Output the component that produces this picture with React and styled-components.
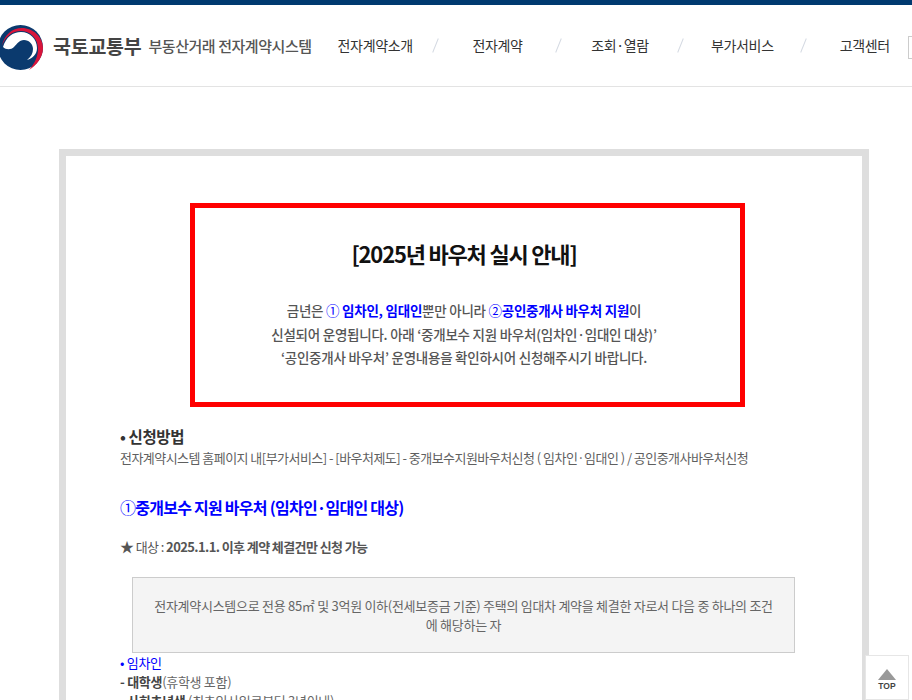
import React from 'react';
import styled, { createGlobalStyle } from 'styled-components';

const GlobalStyle = createGlobalStyle`
  html, body {
    margin: 0;
    padding: 0;
    height: 700px;
    overflow: hidden;
    background: #fff;
  }
  * {
    box-sizing: border-box;
  }
  body {
    font-family: "Noto Sans CJK KR", "Noto Sans", sans-serif;
    color: #555;
  }
`;

const navItems = ['전자계약소개', '전자계약', '조회·열람', '부가서비스', '고객센터'];

const Logo = () => (
  <LogoSvg viewBox="0 0 45 45" aria-hidden="true">
    <circle cx="22.5" cy="22.5" r="22.5" fill="#0b3a6e" />
    <path d="M4 21C6 10 14 3 24 3C35 3 45 12 45 23C45 32 39 40 31 45C37 38 40 31 40 24C40 13 32 6 23 6C14 6 7 12 4 21Z" fill="#d8143a" />
    <path d="M5 22C8 12 15 7 23 7C32 7 39 14 39 23C39 29 35 33 29 35C33 32 35 28 35 24C35 19 31 15 26 15C21 15 19 19 16 22C13 25 8 25 5 22Z" fill="#fff" />
  </LogoSvg>
);

const App = () => (
  <>
    <GlobalStyle />
    <TopBar />
    <Header>
      <Brand>
        <Logo />
        <Ministry>국토교통부</Ministry>
        <SystemName>부동산거래 전자계약시스템</SystemName>
      </Brand>
      <Nav>
        {navItems.map((item) => (
          <NavItem key={item}>{item}</NavItem>
        ))}
      </Nav>
      <SearchStub />
    </Header>
    <Main>
      <Frame>
        <Notice>
          <NoticeTitle>[2025년 바우처 실시 안내]</NoticeTitle>
          <NoticeText>
            금년은 <Blue><Circled>①</Circled> 임차인, 임대인</Blue>뿐만 아니라 <Blue><Circled>②</Circled>공인중개사 바우처 지원</Blue>이
            <br />
            신설되어 운영됩니다. 아래 ‘중개보수 지원 바우처(임차인·임대인 대상)’
            <br />
            ‘공인중개사 바우처’ 운영내용을 확인하시어 신청해주시기 바랍니다.
          </NoticeText>
        </Notice>
        <Body>
          <SubTitle>• 신청방법</SubTitle>
          <Line>전자계약시스템 홈페이지 내[부가서비스] - [바우처제도] - 중개보수지원바우처신청 ( 임차인·임대인 ) / 공인중개사바우처신청</Line>
          <VoucherTitle><Circled>①</Circled>중개보수 지원 바우처 (임차인·임대인 대상)</VoucherTitle>
          <Target><Star>★</Star> 대상 : <b>2025.1.1. 이후 계약 체결건만 신청 가능</b></Target>
          <InfoBox>
            전자계약시스템으로 전용 85㎡ 및 3억원 이하(전세보증금 기준) 주택의 임대차 계약을 체결한 자로서 다음 중 하나의 조건에 해당하는 자
          </InfoBox>
          <ListLine><Blue as="span" $plain>• 임차인</Blue></ListLine>
          <ListLine><b>- 대학생</b>(휴학생 포함)</ListLine>
          <ListLine><b>- 사회초년생</b> (최초입사일로부터 3년이내)</ListLine>
        </Body>
      </Frame>
    </Main>
    <TopButton>
      <TopArrow />
      <TopLabel>TOP</TopLabel>
    </TopButton>
  </>
);

export default App;

const TopBar = styled.div`
  height: 5px;
  background: #003a70;
`;

const Header = styled.header`
  display: flex;
  align-items: center;
  width: 912px;
  height: 82px;
  border-bottom: 1px solid #e3e3e3;
  overflow: hidden;
`;

const Brand = styled.div`
  display: flex;
  align-items: center;
  flex: none;
  width: 316px;
  margin-left: -2px;
`;

const LogoSvg = styled.svg`
  flex: none;
  width: 45px;
  height: 45px;
  margin-top: 3px;
`;

const Ministry = styled.span`
  margin-left: 10px;
  font-size: 19.5px;
  font-weight: 700;
  letter-spacing: -0.25px;
  color: #444;
  white-space: nowrap;
`;

const SystemName = styled.span`
  margin-left: 7px;
  font-size: 15px;
  font-weight: 500;
  letter-spacing: -0.45px;
  color: #555;
  white-space: nowrap;
`;

const Nav = styled.nav`
  display: grid;
  grid-template-columns: repeat(5, 122.4px);
  flex: none;
  margin: 0 -18px 2px 0;
`;

const NavItem = styled.span`
  position: relative;
  font-size: 14px;
  line-height: 20px;
  letter-spacing: -0.35px;
  text-align: center;
  color: #333;
  white-space: nowrap;
  &:not(:last-child)::after {
    content: '';
    position: absolute;
    top: 3px;
    right: 0;
    width: 1px;
    height: 15px;
    background: #d5dae3;
    transform: rotate(22deg);
  }
`;

const SearchStub = styled.div`
  flex: none;
  width: 30px;
  height: 23px;
  margin-top: 4px;
  border: 1px solid #ccc;
`;

const Main = styled.main`
  padding: 62px 43px 0 59px;
`;

const Frame = styled.section`
  width: 810px;
  padding: 47px 54px 0;
  border: 7px solid #dedede;
`;

const Notice = styled.div`
  width: 555px;
  height: 204px;
  margin-left: 70px;
  padding: 29px 7px 0 0;
  border: 5px solid #f00;
  text-align: center;
`;

const NoticeTitle = styled.h2`
  margin: 0;
  font-size: 22px;
  line-height: 32px;
  font-weight: 700;
  letter-spacing: -1.2px;
  color: #111;
`;

const NoticeText = styled.p`
  margin: 30px 0 0;
  font-size: 13.5px;
  line-height: 23.5px;
  font-weight: 500;
  letter-spacing: -0.25px;
  color: #555;
`;

const Blue = styled.strong`
  font-weight: ${({ $plain }) => ($plain ? 400 : 700)};
  color: #00f;
`;

const Circled = styled.span`
  font-weight: 400;
`;

const Star = styled.span`
  font-size: 14px;
  line-height: 1;
`;

const Body = styled.div`
  padding-top: 17px;
`;

const SubTitle = styled.h3`
  margin: 0;
  font-size: 15.5px;
  line-height: 24px;
  font-weight: 700;
  letter-spacing: -0.4px;
  color: #333;
`;

const Line = styled.p`
  margin: 0;
  font-size: 13px;
  line-height: 20px;
  letter-spacing: -0.54px;
  color: #5f5f5f;
  white-space: nowrap;
`;

const VoucherTitle = styled.h3`
  margin: 27px 0 0;
  font-size: 16px;
  line-height: 24px;
  font-weight: 700;
  letter-spacing: -0.75px;
  color: #00f;
`;

const Target = styled.p`
  margin: 16px 0 0;
  font-size: 13px;
  line-height: 24px;
  letter-spacing: -0.6px;
  color: #555;
`;

const InfoBox = styled.div`
  width: 663px;
  height: 76px;
  margin: 18px 0 0 12px;
  padding: 18px 20px;
  border: 1px solid #ccc;
  background: #f4f4f4;
  font-size: 13px;
  line-height: 19px;
  letter-spacing: -0.28px;
  text-align: center;
  color: #666;
`;

const ListLine = styled.p`
  margin: 0;
  font-size: 13px;
  line-height: 19px;
  letter-spacing: -0.3px;
  color: #666;
  b {
    color: #444;
  }
`;

const TopButton = styled.a`
  position: fixed;
  right: 3px;
  bottom: 0;
  display: flex;
  flex-direction: column;
  align-items: center;
  width: 44px;
  height: 45px;
  padding-top: 13px;
  border: 1px solid #e6e6e6;
  background: #fff;
`;

const TopArrow = styled.span`
  width: 0;
  height: 0;
  border-left: 9px solid transparent;
  border-right: 9px solid transparent;
  border-bottom: 11px solid #999;
`;

const TopLabel = styled.span`
  margin-top: 1px;
  font-family: "Liberation Sans", sans-serif;
  font-size: 8.5px;
  line-height: 11px;
  font-weight: 700;
  color: #444;
`;
